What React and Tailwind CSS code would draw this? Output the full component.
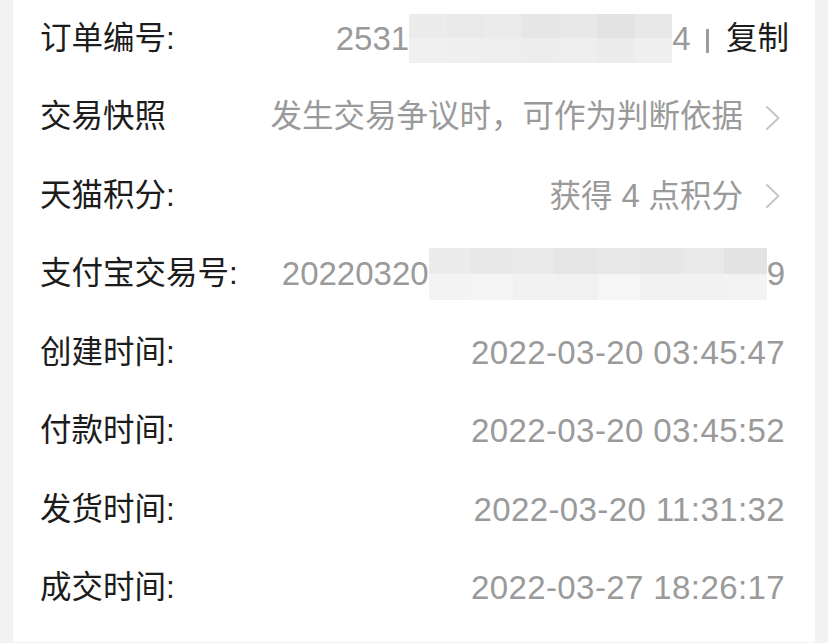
const font = { fontFamily: '"Liberation Sans", "Noto Sans CJK SC", sans-serif' }

function Blur({ w, h, cols }) {
  return (
    <span className="inline-flex flex-col shrink-0" style={{ width: w, height: h }}>
      <span className="flex flex-1">
        {cols.map((c, i) => (
          <span key={i} className="flex-1" style={{ background: c[0] }} />
        ))}
      </span>
      <span className="flex flex-1">
        {cols.map((c, i) => (
          <span key={i} className="flex-1" style={{ background: c[1] }} />
        ))}
      </span>
    </span>
  )
}

function Row({ label, children }) {
  return (
    <div className="h-[78.5px] flex items-center justify-between pl-[27px] pr-[30px]">
      <span className="text-[31.5px] text-[#1c1c1c] whitespace-nowrap">{label}</span>
      <div className="flex items-center text-[#9a9a9a] whitespace-nowrap">{children}</div>
    </div>
  )
}

const chev = (
  <svg width="16" height="26" viewBox="0 0 16 26" className="ml-[22px] mr-[4px] mt-[2px]">
    <polyline points="2,2 13.5,13 2,24" fill="none" stroke="#c6c6c6" strokeWidth="2" strokeLinecap="round" strokeLinejoin="round" />
  </svg>
)

const num = 'text-[33px] tracking-[0.4px]'

export default function App() {
  return (
    <div className="w-[828px] h-[643px] bg-[#f2f2f2] overflow-hidden" style={font}>
      <div className="ml-[13px] w-[802px] h-full bg-white -mt-[1px]">
        <Row label="订单编号:">
          <span className="text-[33px]">2531</span>
          <Blur w={263} h={49} cols={[['#ececec', '#f0f0f0'], ['#e9e9e9', '#efefef'], ['#ebebeb', '#eeeeee'], ['#e6e6e6', '#ededed'], ['#e8e8e8', '#eeeeee'], ['#e3e3e3', '#ececec'], ['#e8e8e8', '#efefef']]} />
          <span className="text-[33px]">4</span>
          <span className="block shrink-0 ml-[16px] mr-[17px] mt-[6px] w-[2.5px] h-[24px] bg-[#9c9c9c]" />
          <span className="text-[31.5px] text-[#1c1c1c] -mr-[4px]">复制</span>
        </Row>
        <Row label="交易快照">
          <span className="text-[31.5px]">发生交易争议时，可作为判断依据</span>
          {chev}
        </Row>
        <Row label="天猫积分:">
          <span className="text-[31.5px]">获得 <span className="text-[33px]">4</span> 点积分</span>
          {chev}
        </Row>
        <Row label="支付宝交易号:">
          <span className="text-[33px]">20220320</span>
          <Blur w={338} h={52} cols={[['#ececec', '#f3f3f3'], ['#e8e8e8', '#f5f5f5'], ['#e9e9e9', '#f2f2f2'], ['#e6e6e6', '#f1f1f1'], ['#e8e8e8', '#f6f6f6'], ['#e7e7e7', '#f1f1f1'], ['#e9e9e9', '#f2f2f2'], ['#e3e3e3', '#f3f3f3']]} />
          <span className="text-[33px]">9</span>
        </Row>
        <Row label="创建时间:"><span className={num}>2022-03-20 03:45:47</span></Row>
        <Row label="付款时间:"><span className={num}>2022-03-20 03:45:52</span></Row>
        <Row label="发货时间:"><span className={num}>2022-03-20 11:31:32</span></Row>
        <Row label="成交时间:"><span className={num}>2022-03-27 18:26:17</span></Row>
      </div>
    </div>
  )
}
